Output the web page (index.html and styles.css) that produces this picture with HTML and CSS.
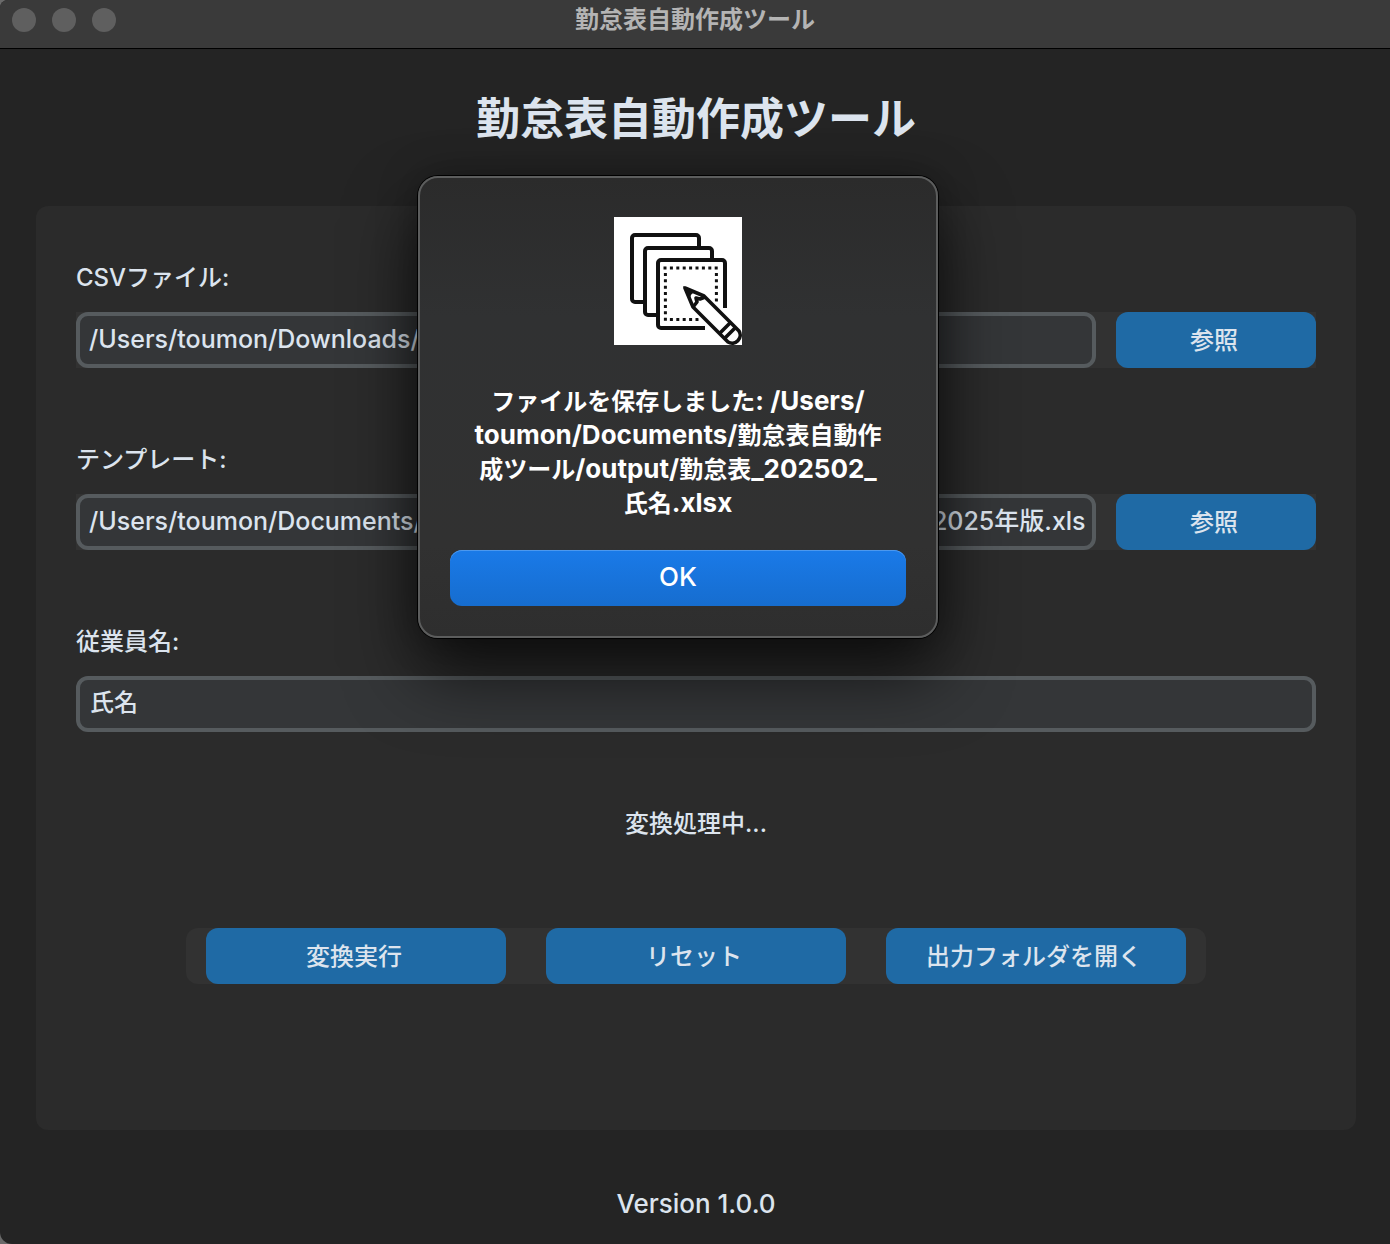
FILE: index.html
```html
<!DOCTYPE html>
<html lang="ja">
<head>
<meta charset="utf-8">
<meta name="viewport" content="width=device-width, initial-scale=1">
<title>勤怠表自動作成ツール</title>
<link rel="stylesheet" href="styles.css">
</head>
<body>
<div class="window">
  <header class="titlebar">
    <div class="lights"><span class="light"></span><span class="light"></span><span class="light"></span></div>
    <span class="titlebar-text">勤怠表自動作成ツール</span>
  </header>
  <main class="content">
    <h1 class="heading">勤怠表自動作成ツール</h1>
    <form class="panel">
      <div class="field">
        <label class="label" for="csv">CSVファイル:</label>
        <div class="file-row">
          <input class="entry entry-path" id="csv" type="text" value="/Users/toumon/Downloads/">
          <button class="button" type="button">参照</button>
        </div>
      </div>
      <div class="field">
        <label class="label" for="template">テンプレート:</label>
        <div class="file-row">
          <input class="entry entry-path" id="template" type="text" value="/Users/toumon/Documents/勤怠表自動作成ツール/template/勤怠表雛形_2025年版.xls">
          <button class="button" type="button">参照</button>
        </div>
      </div>
      <div class="field">
        <label class="label" for="employee">従業員名:</label>
        <input class="entry" id="employee" type="text" value="氏名">
      </div>
      <p class="status">変換処理中...</p>
      <div class="actions">
        <button class="button" type="button">変換実行</button>
        <button class="button" type="button">リセット</button>
        <button class="button" type="button">出力フォルダを開く</button>
      </div>
    </form>
    <footer class="version">Version 1.0.0</footer>
  </main>
  <dialog class="alert" open aria-labelledby="alert-message">
    <svg class="alert-icon" viewBox="0 0 128 128" aria-hidden="true">
      <rect width="128" height="128" fill="#fff"/>
      <g fill="#fff" stroke="#111" stroke-width="4">
        <rect x="18" y="18" width="67" height="67" rx="3"/>
        <rect x="31" y="31" width="67" height="67" rx="3"/>
        <path d="M91 111H47a3 3 0 0 1-3-3V46a3 3 0 0 1 3-3h61a3 3 0 0 1 3 3v45"/>
      </g>
      <path d="M49.500 51H106M51.400 55.900V104M102.400 55.900V86M55.900 102.400H87" fill="none" stroke="#111" stroke-width="3" stroke-dasharray="3 3.400"/>
      <path d="M70 70L90 79L126 115A8 8 0 0 1 115 126L79 90Z" fill="#fff" stroke="#fff" stroke-width="8"/>
      <g fill="none" stroke="#111" stroke-width="3.600" stroke-linejoin="round">
        <path d="M71 71L90 79L125 114A8 8 0 0 1 114 125L79 90Z" fill="#fff"/>
        <path d="M79 90L83 85L82 81L86 82L91 80M117 105L106 116M122 110L111 121"/>
      </g>
      <path d="M69 69L82 75Q76 76 76 82Z" fill="#111"/>
    </svg>
    <p class="alert-message" id="alert-message">ファイルを保存しました<span class="latin">: /Users/<wbr>toumon/Documents/</span>勤怠表自動作成ツール<span class="latin">/output/</span>勤怠表<span class="latin">_202502_</span><wbr>氏名<span class="latin">.xlsx</span></p>
    <button class="alert-button" type="button">OK</button>
  </dialog>
</div>
</body>
</html>
```
FILE: styles.css
```css
* {
  box-sizing: border-box;
}

html {
  background: #6a6a6a;
}

body {
  margin: 0;
  color: #dce4ee;
  font: 500 24px/32px Inter, "Noto Sans CJK JP", sans-serif;
}

button,
input {
  font: inherit;
  color: inherit;
}

.window {
  position: relative;
  display: flex;
  flex-direction: column;
  min-height: 100vh;
  background: #242424;
  border-radius: 8px 0 0 12px;
}

.titlebar {
  display: grid;
  grid-template-columns: 1fr auto 1fr;
  align-items: center;
  padding: 0 12px 8px;
  height: 49px;
  background: #3a3a3a;
  border-bottom: 1px solid #000;
  border-top-left-radius: 8px;
}

.lights {
  display: flex;
  gap: 16px;
}

.light {
  width: 24px;
  height: 24px;
  border-radius: 50%;
  background: #5f5f5f;
}

.titlebar-text {
  color: #b4b4b4;
  font-weight: 700;
}

.content {
  flex: 1;
  display: flex;
  flex-direction: column;
  padding: 38px 34px 24px 36px;
}

.heading {
  margin: 0 0 55px;
  font-size: 44px;
  line-height: 64px;
  font-weight: 700;
  text-align: center;
}

.panel {
  flex: 1;
  display: flex;
  flex-direction: column;
  padding: 56px 40px;
  border-radius: 12px;
  background: #2b2b2b;
}

.field {
  display: flex;
  flex-direction: column;
  gap: 18px;
  margin-bottom: 76px;
}

.label {
  align-self: flex-start;
}

.file-row {
  display: flex;
  gap: 20px;
  background: #323232;
}

.entry {
  flex: 1;
  min-width: 0;
  min-height: 56px;
  padding: 0 10px 2px;
  border: 4px solid #565b5e;
  border-radius: 12px;
  background: #343638;
}

.entry-path {
  padding-right: 4px;
  padding-left: 9px;
  font-size: 25px;
}

.button {
  width: 200px;
  height: 56px;
  padding: 2px 4px 0 0;
  border: 0;
  border-radius: 12px;
  background: #1f6aa5;
}

.status {
  margin: 0 0 88px;
  text-align: center;
}

.actions {
  display: flex;
  align-self: center;
  gap: 40px;
  padding: 0 20px;
  border-radius: 12px;
  background: #323232;
}

.actions .button {
  width: 300px;
}

.version {
  margin-top: 58px;
  font-size: 26px;
  text-align: center;
}

.alert {
  position: absolute;
  top: 176px;
  left: calc(50% - 277px);
  display: flex;
  flex-direction: column;
  align-items: center;
  width: 520px;
  margin: 0;
  padding: 39px 30px 30px;
  border: 2px solid #5c5d5d;
  border-radius: 20px;
  background: linear-gradient(#2b2b2b, #303132 30%, #313131 80%, #2e2e2e);
  color: #fff;
  box-shadow: 0 0 0 1px #000, 0 36px 70px rgb(0 0 0 / 65%), 0 0 40px rgb(0 0 0 / 30%);
}

.alert-icon {
  width: 128px;
  height: 128px;
}

.alert-message {
  width: 418px;
  margin: 40px 0 29px;
  font-weight: 700;
  line-height: 34px;
  text-align: center;
}

.latin {
  font-size: 26px;
  line-height: 32px;
}

.alert-button {
  align-self: stretch;
  height: 56px;
  padding: 0 0 2px;
  border: 0;
  border-radius: 12px;
  background: linear-gradient(#1a7ae8, #166dcf);
  box-shadow: inset 0 1px #4c98ee;
  font-size: 26px;
}
```
